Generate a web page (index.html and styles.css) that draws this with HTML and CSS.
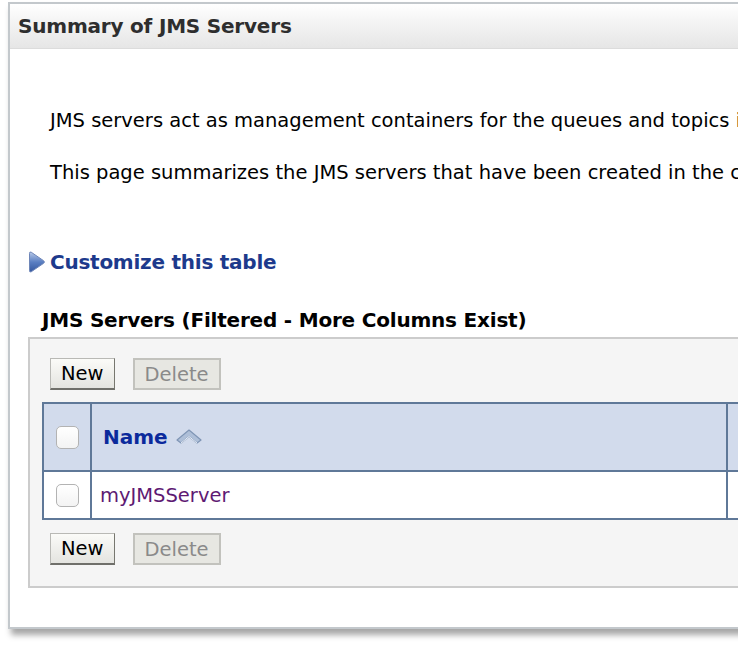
FILE: index.html
```html
<!DOCTYPE html>
<html>
<head>
<meta charset="utf-8">
<link rel="stylesheet" href="styles.css">
</head>
<body>
<div class="panel">
  <div class="panel-header"><h1 class="title">Summary of JMS Servers</h1></div>
  <div class="panel-body">
    <p class="intro">JMS servers act as management containers for the queues and topics in JMS modules that are targeted to them.</p>
    <p class="intro intro-second">This page summarizes the JMS servers that have been created in the current WebLogic Server domain.</p>
    <div class="customize">
      <svg class="tri" width="18" height="24" viewBox="0 0 18 24">
        <defs>
          <linearGradient id="tg" x1="0" y1="0" x2="0" y2="1">
            <stop offset="0" stop-color="#b8c9e8"/>
            <stop offset="0.5" stop-color="#5a7fc2"/>
            <stop offset="1" stop-color="#34579e"/>
          </linearGradient>
        </defs>
        <path d="M3.2 2.2 Q1.5 1.4 1.5 3.4 L1.5 20.6 Q1.5 22.6 3.2 21.8 L15.6 13.3 Q17.2 12 15.6 10.7 Z" fill="url(#tg)" stroke="#6e86b8" stroke-width="1"/>
      </svg>
      <a class="customize-link">Customize this table</a>
    </div>
    <h2 class="table-title">JMS Servers (Filtered - More Columns Exist)</h2>
    <div class="table-box">
      <div class="btn-row">
        <button class="btn">New</button>
        <button class="btn btn-disabled">Delete</button>
      </div>
      <table class="grid">
        <tr class="head">
          <th class="chk-col"><span class="chk"></span></th>
          <th class="name-col"><span class="sort-name">Name</span>
            <svg class="sort" width="28" height="20" viewBox="0 0 28 20">
              <path d="M2 13 L14 3 L26 13 L22 16 L14 9.5 L6 16 Z" fill="#aebfd8" stroke="#7f95b5" stroke-width="1.2" stroke-linejoin="round"/>
              <path d="M6 16 L14 9.5 L22 16" fill="none" stroke="#e8eef7" stroke-width="1"/>
            </svg>
          </th>
          <th class="rest-col"></th>
        </tr>
        <tr class="row">
          <td class="chk-col"><span class="chk"></span></td>
          <td class="name-col"><a class="server-link">myJMSServer</a></td>
          <td class="rest-col"></td>
        </tr>
      </table>
      <div class="btn-row btn-row-bottom">
        <button class="btn">New</button>
        <button class="btn btn-disabled">Delete</button>
      </div>
    </div>
  </div>
</div>
</body>
</html>
```
FILE: styles.css
```css
html, body {
  margin: 0;
  padding: 0;
  background: #ffffff;
  overflow: hidden;
  width: 738px;
  height: 664px;
}
body {
  font-family: "DejaVu Sans", Tahoma, sans-serif;
  color: #000;
}
.panel {
  margin: 2px 0 0 8px;
  width: 780px;
  height: 627px;
  border-top: 2px solid #c3c8cc;
  border-left: 2px solid #c3c8cc;
  border-bottom: 2px solid #c3c8cc;
  background: #fff;
  box-shadow: 3px 6px 6px rgba(0,0,0,0.35);
  box-sizing: border-box;
}
.panel-header {
  height: 44px;
  background: linear-gradient(#ffffff, #f4f4f4 40%, #e6e6e6);
  border-bottom: 1px solid #dcdcdc;
  display: flex;
  align-items: center;
}
.title {
  margin: 0 0 0 8px;
  font-size: 20px;
  font-weight: bold;
  color: #2e2e2e;
  letter-spacing: -0.2px;
}
.panel-body {
  padding-top: 58px;
}
.intro {
  margin: 0 0 0 40px;
  font-size: 19.5px;
  line-height: 28px;
  white-space: nowrap;
}
.intro-second {
  margin-top: 24px;
}
.customize {
  display: flex;
  align-items: center;
  margin: 62px 0 0 18px;
  height: 26px;
}
.tri {
  margin-right: 4px;
}
.customize-link {
  font-size: 20px;
  font-weight: bold;
  color: #1d3a8c;
  letter-spacing: -0.25px;
}
.table-title {
  margin: 32px 0 0 32px;
  font-size: 20px;
  font-weight: bold;
  line-height: 26px;
  letter-spacing: -0.2px;
}
.table-box {
  margin: 4px 0 0 18px;
  background: #f5f5f5;
  border: 2px solid #cccccc;
  padding: 19px 0 21px 12px;
}
.btn-row {
  display: flex;
  gap: 18px;
  margin-left: 8px;
}
.btn-row-bottom {
  margin-top: 13px;
}
.btn {
  font-family: "DejaVu Sans", Tahoma, sans-serif;
  font-size: 19.5px;
  height: 32px;
  padding: 0 10px;
  background: linear-gradient(#fbfbf8, #e4e4e0);
  border: 1px solid #b9b9b5;
  border-right-color: #77776f;
  border-bottom: 2px solid #6f6f6a;
  color: #000;
}
.btn-disabled {
  background: #e7e7e2;
  border: 2px solid #c2c2bd;
  color: #8a8a8a;
}
.grid {
  margin-top: 12px;
  border-collapse: collapse;
  border: 2px solid #5f7898;
  width: 760px;
}
.grid td, .grid th {
  border: 2px solid #5f7898;
  padding: 0;
  text-align: left;
}
.head {
  height: 68px;
  background: #d2dbec;
}
.row {
  height: 48px;
  background: #fff;
}
.grid .chk-col {
  width: 46px;
  text-align: center;
}
.name-col {
  width: 634px;
}
.chk {
  display: inline-block;
  width: 21px;
  height: 21px;
  border: 1px solid #b3b3b3;
  border-radius: 5px;
  background: linear-gradient(#ffffff, #f3f3f3);
  vertical-align: middle;
}
.sort-name {
  margin-left: 11px;
  font-size: 20px;
  font-weight: bold;
  color: #0b2a9c;
  vertical-align: middle;
}
.sort {
  vertical-align: middle;
  margin-left: 2px;
}
.server-link {
  margin-left: 8px;
  font-size: 19.5px;
  color: #5e1a73;
}
```
